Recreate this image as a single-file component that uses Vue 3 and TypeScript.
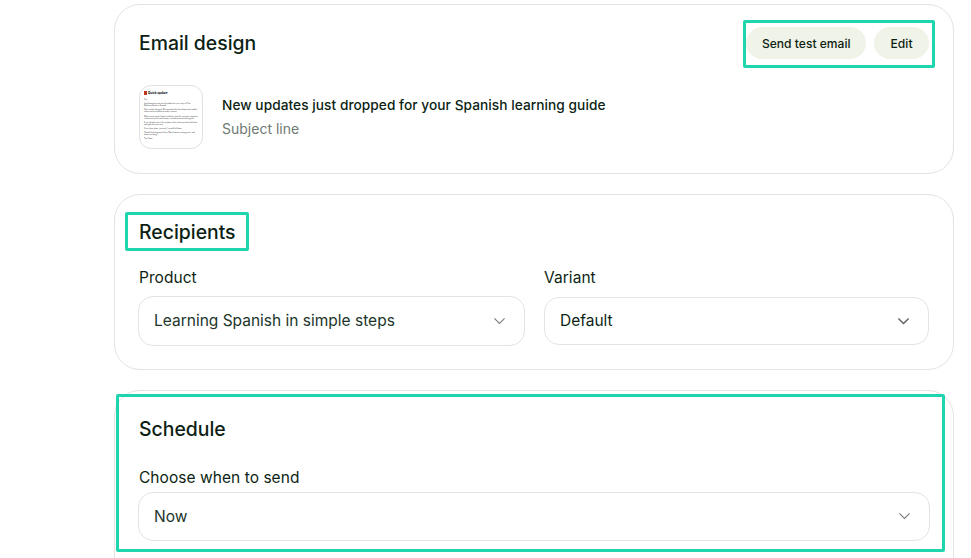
<script setup lang="ts">
interface Marker {
  name: string
  left: number
  top: number
  width: number
  height: number
}

// teal annotation boxes drawn over the page
const markers: Marker[] = [
  { name: 'actions', left: 743, top: 20, width: 192, height: 48 },
  { name: 'recipients', left: 125, top: 212, width: 124, height: 39 },
  { name: 'schedule', left: 116, top: 394, width: 829, height: 158 },
]

const previewLines = [
  'Hey,',
  'Just dropped a new set of updates for your copy of The Definitive Guide to Spanish.',
  'Here is what changed. We reworked the first chapter and added a few practice lessons to make it easier.',
  'What is new inside: fresh vocabulary lists for everyday situations, a short review for each lesson, a simple pronunciation guide.',
  'If you already own it, the update is free. Just open the link below and grab the new copy.',
  'If you have ideas, just reply, I read all of them.',
  'Thanks for being part of this. More lessons coming soon, and happy studying.',
  'The Team',
]
</script>

<template>
  <div class="page">
    <section class="card design">
      <header class="design-head">
        <h2>Email design</h2>
        <div class="actions">
          <button class="pill">Send test email</button>
          <button class="pill edit">Edit</button>
        </div>
      </header>
      <div class="email">
        <div class="thumb">
          <div class="thumb-title"><span class="thumb-dot"></span>Quick update</div>
          <p v-for="(line, i) in previewLines" :key="i">{{ line }}</p>
        </div>
        <div class="email-text">
          <div class="subject">New updates just dropped for your Spanish learning guide</div>
          <div class="subject-label">Subject line</div>
        </div>
      </div>
    </section>

    <section class="card recipients">
      <h2>Recipients</h2>
      <div class="fields">
        <div class="field first">
          <label>Product</label>
          <div class="select tall">
            <span>Learning Spanish in simple steps</span>
            <svg viewBox="0 0 14 8" width="13" height="8" fill="none"><path d="M1.5 1.2 7 6.6l5.5-5.4" stroke="#7b7b7b" stroke-width="1.2" /></svg>
          </div>
        </div>
        <div class="field second">
          <label>Variant</label>
          <div class="select">
            <span class="dark">Default</span>
            <svg viewBox="0 0 14 8" width="13" height="8" fill="none"><path d="M1.5 1.2 7 6.6l5.5-5.4" stroke="#5f5f5f" stroke-width="1.5" /></svg>
          </div>
        </div>
      </div>
    </section>

    <section class="card schedule">
      <h2>Schedule</h2>
      <label>Choose when to send</label>
      <div class="select wide">
        <span>Now</span>
        <svg viewBox="0 0 14 8" width="13" height="8" fill="none"><path d="M1.5 1.2 7 6.6l5.5-5.4" stroke="#7b7b7b" stroke-width="1.2" /></svg>
      </div>
    </section>

    <div
      v-for="m in markers"
      :key="m.name"
      class="marker"
      :style="{ left: m.left + 'px', top: m.top + 'px', width: m.width + 'px', height: m.height + 'px' }"
    ></div>
  </div>
</template>

<style scoped>
.page {
  position: relative;
  width: 971px;
  height: 558px;
  overflow: hidden;
  box-sizing: border-box;
  padding: 4px 0 0 114px;
  background: #fff;
  font-family: Inter, "Noto Sans", sans-serif;
  color: #0d1f14;
}
.card {
  box-sizing: border-box;
  width: 840px;
  margin-bottom: 20px;
  padding: 0 24px 0 23px;
  border: 1px solid #e3e3e3;
  border-radius: 26px;
}
h2 {
  margin: 0 0 0 1px;
  font-size: 19.4px;
  font-weight: 500;
  line-height: 26px;
}
label {
  display: block;
  margin-left: 1px;
  font-size: 15.5px;
  line-height: 20px;
  letter-spacing: 0.05px;
}
.field.second label { margin-left: 0; }

.design { height: 170px; }
.design-head {
  display: flex;
  align-items: center;
  justify-content: space-between;
  height: 32px;
  margin-top: 22px;
}
.actions { display: flex; gap: 8px; }
.pill {
  height: 32px;
  padding: 0 15.5px;
  border: none;
  border-radius: 16px;
  background: #f0f3e7;
  color: #0d1f14;
  font: 500 12.1px Inter, "Noto Sans", sans-serif;
}
.pill.edit { padding: 0 16.5px; }
.email {
  display: flex;
  align-items: center;
  gap: 19px;
  margin: 26px 0 0 1px;
}
.thumb {
  box-sizing: border-box;
  flex: none;
  width: 64px;
  height: 64px;
  padding: 5px 4px 0;
  overflow: hidden;
  border: 1px solid #e0e0e0;
  border-radius: 12px;
  font-size: 1.75px;
  line-height: 2px;
  color: #333;
}
.thumb p { margin: 0 0 2.2px; }
.thumb-title {
  display: flex;
  align-items: center;
  gap: 1px;
  margin-bottom: 3px;
  font-size: 3px;
  font-weight: 700;
  color: #000;
}
.thumb-dot {
  width: 3px;
  height: 4px;
  background: #c2361f;
}
.subject {
  font-size: 13.7px;
  font-weight: 500;
  line-height: 20px;
  letter-spacing: 0.05px;
}
.subject-label {
  margin-top: 4px;
  font-size: 14px;
  line-height: 20px;
  color: #6f7a72;
}

.recipients { height: 176px; padding-top: 24px; }
.fields {
  display: flex;
  gap: 19px;
  margin-top: 23px;
}
.field.first { width: 387px; }
.field.second { width: 385px; }
.select {
  box-sizing: border-box;
  display: flex;
  align-items: center;
  justify-content: space-between;
  height: 48px;
  margin-top: 9px;
  padding: 0 18px 1px 15px;
  border: 1px solid #e3e3e3;
  border-radius: 15px;
  font-size: 15.5px;
  color: #21352a;
}
.select.tall { height: 50px; margin-top: 8px; }
.select .dark { color: #0d1f14; }

.schedule { height: 200px; padding-top: 25px; }
.schedule label { margin-top: 26px; }
.select.wide { width: 792px; height: 49px; margin-top: 4px; }

.marker {
  position: absolute;
  box-sizing: border-box;
  border: 3px solid #1fd5ae;
  border-radius: 2px;
  pointer-events: none;
}
</style>
